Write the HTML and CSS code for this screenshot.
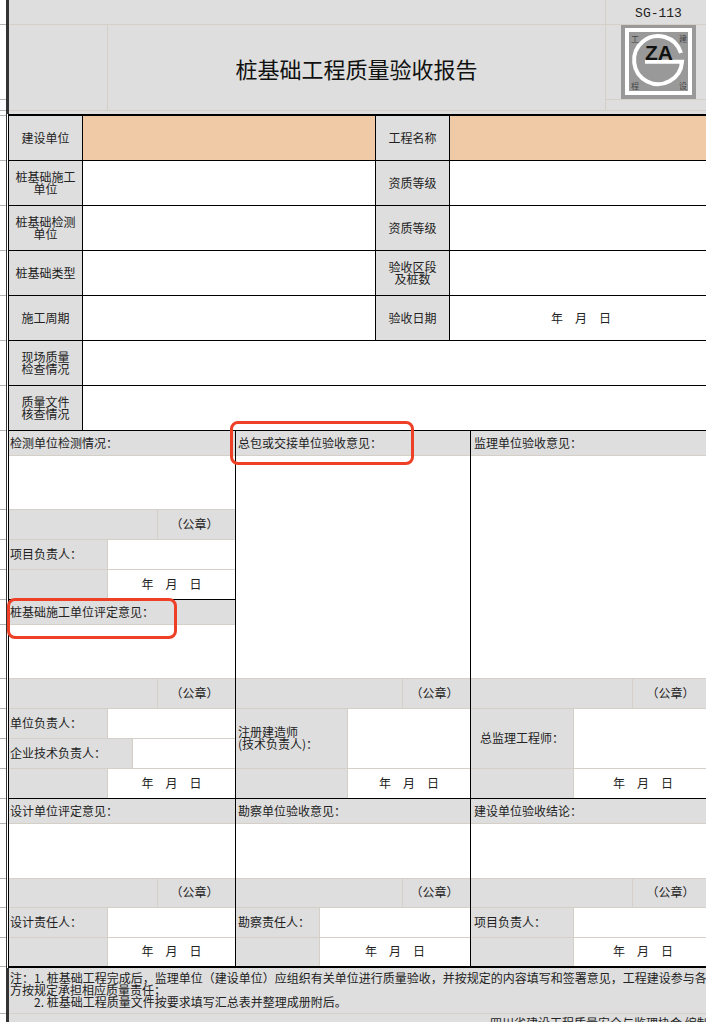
FILE: index.html
```html
<!DOCTYPE html>
<html lang="zh-CN">
<head>
<meta charset="utf-8">
<title>桩基础工程质量验收报告</title>
<link rel="stylesheet" href="styles.css">
</head>
<body>
<div class="sheet">
  <div class="gutter">
    <i class="g25"></i><i class="g75"></i><i class="g11"></i><i class="g5"></i>
    <i class="g45"></i><i class="g45"></i><i class="g45"></i><i class="g45"></i><i class="g45"></i><i class="g45"></i><i class="g45"></i>
    <i class="g79"></i><i class="g30"></i><i class="g30"></i><i class="g30"></i><i class="g25"></i><i class="g54"></i>
    <i class="g30"></i><i class="g30"></i><i class="g30"></i><i class="g30"></i>
    <i class="g25"></i><i class="g55"></i><i class="g29"></i><i class="g30"></i><i class="g29"></i><i class="g47"></i>
  </div>
  <div class="rule"></div>
  <div class="main">
    <header class="head">
      <div class="head-top"></div>
      <div class="head-code">SG-113</div>
      <div class="head-blank"></div>
      <h1 class="head-title">桩基础工程质量验收报告</h1>
      <div class="head-logo">
        <div class="logo-box">
          <svg class="logo" viewBox="0 0 75 74" width="75" height="74" role="img" aria-label="ZA">
            <rect width="75" height="74" fill="#999"/>
            <rect x="6" y="5" width="63" height="63" fill="none" stroke="#fff" stroke-width="4"/>
            <path d="M60 28A24 24 0 1 0 61 36.8H24" fill="none" stroke="#fff" stroke-width="4"/>
            <text x="38" y="35" text-anchor="middle" class="logo-za">ZA</text>
            <text x="10" y="17" class="logo-small">工</text>
            <text x="58" y="17" class="logo-small">建</text>
            <text x="10" y="64" class="logo-small">程</text>
            <text x="58" y="64" class="logo-small">设</text>
          </svg>
        </div>
      </div>
    </header>

    <div class="tbl">
      <section class="info">
        <div class="lab">建设单位</div><div class="val peach"></div><div class="lab">工程名称</div><div class="val peach last"></div>
        <div class="lab">桩基础施工<br>单位</div><div class="val"></div><div class="lab">资质等级</div><div class="val last"></div>
        <div class="lab">桩基础检测<br>单位</div><div class="val"></div><div class="lab">资质等级</div><div class="val last"></div>
        <div class="lab">桩基础类型</div><div class="val"></div><div class="lab">验收区段<br>及桩数</div><div class="val last"></div>
        <div class="lab">施工周期</div><div class="val"></div><div class="lab">验收日期</div><div class="val last date-val">年　月　日</div>
        <div class="lab">现场质量<br>检查情况</div><div class="val wide"></div>
        <div class="lab">质量文件<br>核查情况</div><div class="val wide"></div>
      </section>

      <section class="band">
        <div class="col c1">
          <div class="row h25 shade pad1">检测单位检测情况：</div>
          <div class="row h54"></div>
          <div class="row h30"><div class="side shade s149"></div><div class="fill shade seal">（公章）</div></div>
          <div class="row h30"><div class="side shade s99 pad1">项目负责人：</div><div class="fill"></div></div>
          <div class="row h30 black"><div class="side shade s99"></div><div class="fill date">年　月　日</div></div>
          <div class="row h25 shade pad1">桩基础施工单位评定意见：</div>
          <div class="row h54"></div>
          <div class="row h30"><div class="side shade s149"></div><div class="fill shade seal">（公章）</div></div>
          <div class="row h30"><div class="side shade s99 pad1">单位负责人：</div><div class="fill"></div></div>
          <div class="row h30"><div class="side shade s124 pad1">企业技术负责人：</div><div class="fill"></div></div>
          <div class="row h30 black"><div class="side shade s99"></div><div class="fill date">年　月　日</div></div>
        </div>
        <div class="col c2">
          <div class="row h25 shade pad2">总包或交接单位验收意见：</div>
          <div class="row h223"></div>
          <div class="row h30"><div class="side shade s167"></div><div class="fill shade seal">（公章）</div></div>
          <div class="row h60"><div class="side shade s112 pad2">注册建造师<br>(技术负责人)：</div><div class="fill"></div></div>
          <div class="row h30 black"><div class="side shade s112"></div><div class="fill date">年　月　日</div></div>
        </div>
        <div class="col c3">
          <div class="row h25 shade pad3">监理单位验收意见：</div>
          <div class="row h223"></div>
          <div class="row h30"><div class="side shade s162"></div><div class="fill shade seal">（公章）</div></div>
          <div class="row h60"><div class="side shade s103 center">总监理工程师：</div><div class="fill"></div></div>
          <div class="row h30 black"><div class="side shade s103"></div><div class="fill date">年　月　日</div></div>
        </div>
      </section>

      <section class="band">
        <div class="col c1">
          <div class="row h25 shade pad1">设计单位评定意见：</div>
          <div class="row h55"></div>
          <div class="row h29"><div class="side shade s149"></div><div class="fill shade seal">（公章）</div></div>
          <div class="row h30"><div class="side shade s99 pad1">设计责任人：</div><div class="fill"></div></div>
          <div class="row h28 end"><div class="side shade s99"></div><div class="fill date">年　月　日</div></div>
        </div>
        <div class="col c2">
          <div class="row h25 shade pad2">勘察单位验收意见：</div>
          <div class="row h55"></div>
          <div class="row h29"><div class="side shade s167"></div><div class="fill shade seal">（公章）</div></div>
          <div class="row h30"><div class="side shade s84 pad2">勘察责任人：</div><div class="fill"></div></div>
          <div class="row h28 end"><div class="side shade s84"></div><div class="fill date">年　月　日</div></div>
        </div>
        <div class="col c3">
          <div class="row h25 shade pad3">建设单位验收结论：</div>
          <div class="row h55"></div>
          <div class="row h29"><div class="side shade s162"></div><div class="fill shade seal">（公章）</div></div>
          <div class="row h30"><div class="side shade s103 pad3">项目负责人：</div><div class="fill"></div></div>
          <div class="row h28 end"><div class="side shade s103"></div><div class="fill date">年　月　日</div></div>
        </div>
      </section>
    </div>

    <footer class="foot">
      <div class="note">
        <p>注：1. 桩基础工程完成后，监理单位（建设单位）应组织有关单位进行质量验收，并按规定的内容填写和签署意见，工程建设参与各</p>
        <p>方按规定承担相应质量责任；</p>
        <p class="indent">2. 桩基础工程质量文件按要求填写汇总表并整理成册附后。</p>
      </div>
      <div class="maker">四川省建设工程质量安全与监理协会 编制</div>
    </footer>
  </div>
  <div class="mark mark-a"></div>
  <div class="mark mark-b"></div>
</div>
</body>
</html>
```
FILE: styles.css
```css
html, body {
  margin: 0;
  height: 1022px;
  overflow: hidden;
  background: #fff;
}
.sheet {
  position: relative;
  display: flex;
  width: 712px;
  height: 1022px;
  overflow: hidden;
  font: 12px/12px "Noto Sans CJK SC", "Liberation Sans", sans-serif;
  color: #222;
}

/* spreadsheet row ticks on the far left */
.gutter {
  flex: none;
  width: 6px;
  display: flex;
  flex-direction: column;
}
.gutter i {
  display: block;
  flex: none;
  box-sizing: border-box;
  border-bottom: 1px solid #b4b4b4;
}
.g5 { height: 5px; }
.g11 { height: 11px; }
.g25 { height: 25px; }
.g29 { height: 29px; }
.g30 { height: 30px; }
.g45 { height: 45px; }
.g47 { height: 47px; }
.g54 { height: 54px; }
.g55 { height: 55px; }
.g75 { height: 75px; }
.g79 { height: 79px; }

.rule {
  flex: none;
  width: 1px;
  background: #333;
}
.main {
  flex: 1;
  min-width: 0;
  display: flex;
  flex-direction: column;
}

/* title block */
.head {
  display: grid;
  grid-template-columns: 99px 498px 1fr;
  grid-template-rows: 25px 86px 3px;
  height: 114px;
  box-sizing: border-box;
  border-left: 2px solid #333;
  background: #dedede;
}
.head-top {
  grid-column: 1 / 3;
  border-bottom: 1px solid #d4d0c8;
  border-right: 1px solid #d4d0c8;
}
.head-code {
  display: flex;
  align-items: center;
  justify-content: center;
  padding: 3px 1px 0 0;
  border-bottom: 1px solid #d4d0c8;
  font: 13px/14px "Liberation Mono", monospace;
  color: #222;
}
.head-blank {
  border-right: 1px solid #d4d0c8;
  border-bottom: 1px solid #d4d0c8;
}
.head-title {
  margin: 0;
  display: flex;
  align-items: center;
  justify-content: center;
  border-right: 1px solid #d4d0c8;
  border-bottom: 1px solid #d4d0c8;
  font-size: 22px;
  line-height: 24px;
  font-weight: 400;
  color: #111;
}
.head-logo {
  border-bottom: 1px solid #d4d0c8;
}
.logo-box {
  height: 75px;
  box-sizing: border-box;
  padding-left: 15px;
  border-bottom: 1px solid #d4d0c8;
}
.logo {
  display: block;
}
.logo-za {
  font: 700 21px "Liberation Sans", sans-serif;
  fill: #111;
}
.logo-small {
  font: 8px "Noto Sans CJK SC", sans-serif;
  fill: #444;
}

/* main form */
.tbl {
  margin-left: 1px;
  border-left: 1px solid #000;
  border-top: 2px solid #000;
  border-bottom: 2px solid #000;
}
.info {
  display: grid;
  grid-template-columns: 74px 293px 74px 1fr;
  grid-auto-rows: 45px;
}
.lab, .val {
  box-sizing: border-box;
  border-bottom: 1px solid #000;
  border-right: 1px solid #000;
}
.lab {
  display: flex;
  align-items: center;
  justify-content: center;
  text-align: center;
  background: #dedede;
}
.val {
  display: flex;
  align-items: center;
  justify-content: center;
}
.val.last, .val.wide {
  border-right: 0;
}
.val.wide {
  grid-column: 2 / 5;
}
.peach {
  background: #f0c9a6;
}
.date-val {
  color: #222;
}

.band {
  display: flex;
}
.col {
  flex: none;
  box-sizing: border-box;
  border-right: 1px solid #000;
}
.c1 { width: 227px; }
.c2 { width: 235px; }
.c3 { flex: 1; border-right: 0; }

.row {
  display: flex;
  align-items: center;
  box-sizing: border-box;
  border-bottom: 1px solid #d4d0c8;
}
.row.black { border-bottom-color: #000; }
.row.end { border-bottom: 0; }
.h25 { height: 25px; }
.h28 { height: 28px; }
.h29 { height: 29px; }
.h30 { height: 30px; }
.h54 { height: 54px; }
.h55 { height: 55px; }
.h60 { height: 60px; }
.h223 { height: 223px; }

.shade { background: #dedede; }
.pad1 { padding-left: 1px; }
.pad2 { padding-left: 2px; }
.pad3 { padding-left: 3px; }
.center { justify-content: center; }

.side {
  flex: none;
  align-self: stretch;
  display: flex;
  align-items: center;
  box-sizing: border-box;
  padding-bottom: 2px;
  border-right: 1px solid #d4d0c8;
}
.s84 { width: 84px; }
.s99 { width: 99px; }
.s103 { width: 103px; }
.s112 { width: 112px; }
.s124 { width: 124px; }
.s149 { width: 149px; }
.s162 { width: 162px; }
.s167 { width: 167px; }

.fill {
  flex: 1;
  align-self: stretch;
  display: flex;
  align-items: center;
  justify-content: center;
  padding-bottom: 2px;
}
.seal { padding-right: 4px; }

/* footnote */
.foot {
  flex: 1;
  border-left: 2px solid #333;
  background: #dedede;
}
.note {
  height: 46px;
  box-sizing: border-box;
  padding: 4px 0 0 1px;
  border-bottom: 1px solid #d4d0c8;
  white-space: nowrap;
}
.note p { margin: 0; }
.note .indent { padding-left: 24px; }
.maker {
  padding: 3px 0 0 481px;
  white-space: nowrap;
}

/* red hand-drawn annotations over the form */
.mark {
  position: absolute;
  box-sizing: border-box;
  border: 3px solid #ee4027;
  border-radius: 8px;
}
.mark-a { left: 230px; top: 421px; width: 184px; height: 44px; }
.mark-b { left: 7px; top: 598px; width: 170px; height: 41px; }
```
